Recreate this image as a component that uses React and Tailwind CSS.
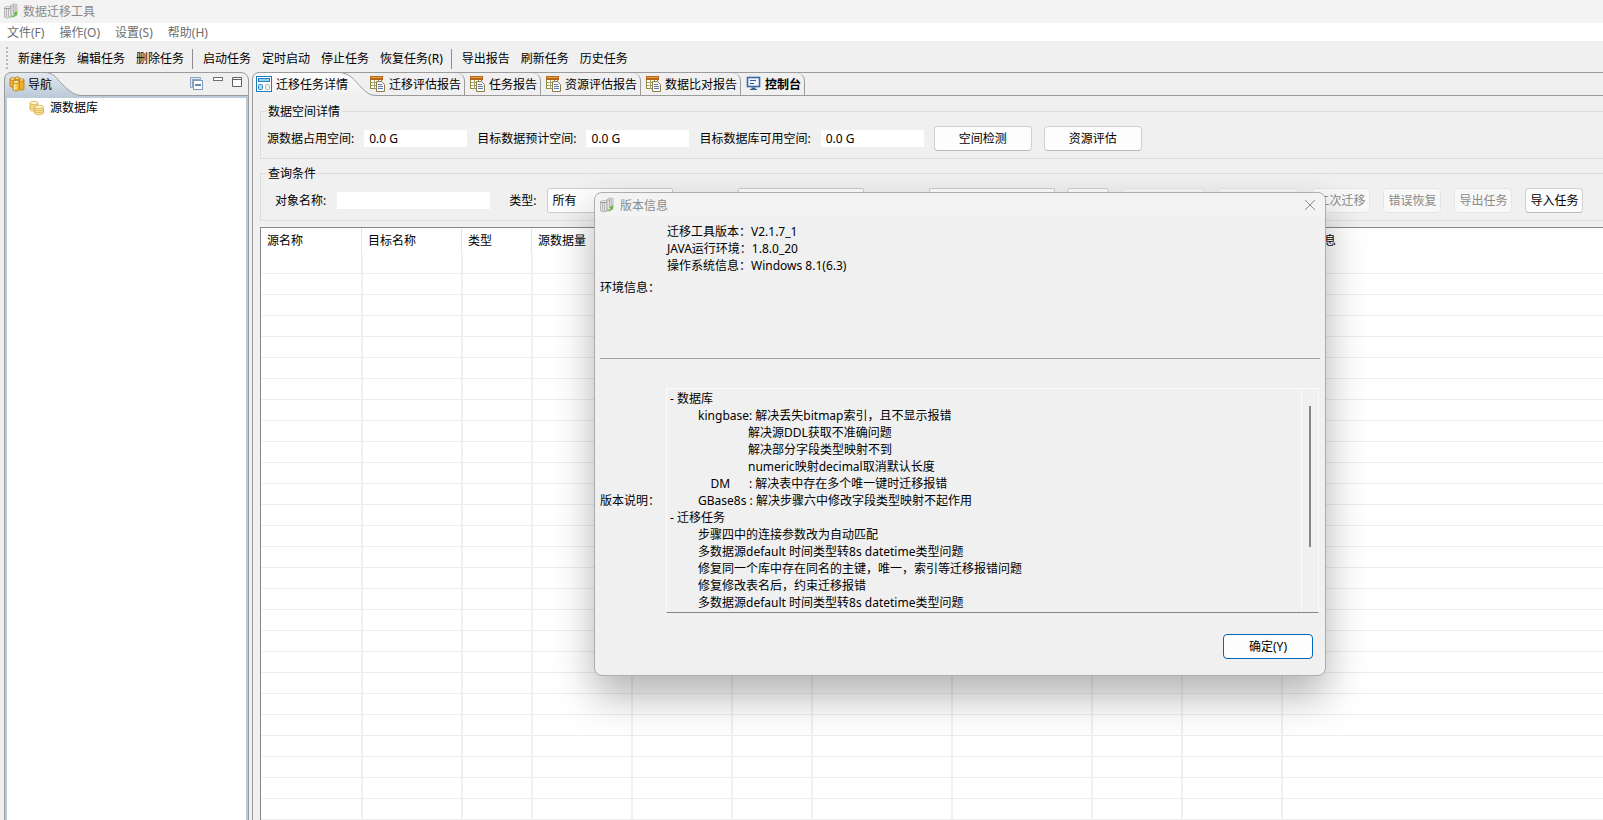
import React, { useState } from 'react';

const menus = ['文件(F)', '操作(O)', '设置(S)', '帮助(H)'];

const toolbarGroups = [
    ['新建任务', '编辑任务', '删除任务'],
    ['启动任务', '定时启动', '停止任务', '恢复任务(R)'],
    ['导出报告', '刷新任务', '历史任务'],
];

const reportTabs = ['迁移评估报告', '任务报告', '资源评估报告', '数据比对报告'];

const spaces = [
    { id: 'source-used', label: '源数据占用空间:' },
    { id: 'target-expected', label: '目标数据预计空间:' },
    { id: 'target-free', label: '目标数据库可用空间:' },
];

const columns = [
    { id: 'source', name: '源名称', width: 'w-[101px]' },
    { id: 'target', name: '目标名称', width: 'w-[100px]' },
    { id: 'type', name: '类型', width: 'w-[70px]' },
    { id: 'source-rows', name: '源数据量', width: 'w-[100px]' },
    { id: 'target-rows', name: '', width: 'w-[100px]' },
    { id: 'state', name: '', width: 'w-[80px]' },
    { id: 'start', name: '', width: 'w-[140px]' },
    { id: 'end', name: '', width: 'w-[140px]' },
    { id: 'elapsed', name: '', width: 'w-[90px]' },
    { id: 'progress', name: '', width: 'w-[100px]' },
    { id: 'error', name: '错误信息', width: 'w-auto' },
];

const envInfo = ['迁移工具版本：V2.1.7_1', 'JAVA运行环境：1.8.0_20', '操作系统信息：Windows 8.1(6.3)'];

const releaseNotes = `- 数据库
         kingbase: 解决丢失bitmap索引，且不显示报错
                         解决源DDL获取不准确问题
                         解决部分字段类型映射不到
                         numeric映射decimal取消默认长度
             DM      : 解决表中存在多个唯一键时迁移报错
         GBase8s : 解决步骤六中修改字段类型映射不起作用
- 迁移任务
         步骤四中的连接参数改为自动匹配
         多数据源default 时间类型转8s datetime类型问题
         修复同一个库中存在同名的主键，唯一，索引等迁移报错问题
         修复修改表名后，约束迁移报错
         多数据源default 时间类型转8s datetime类型问题`;

// Servidores grises con la flecha verde de la aplicación
function AppIcon() {
    return (
        <svg width="16" height="16" viewBox="0 0 16 16" aria-hidden="true">
            <path d="M7.5 2.5 10 1l4 .5v9L10.500 13l-3-1z" fill="#e2e2e2" stroke="#b0b0b0" strokeWidth=".8" />
            <path d="M10.500 2.500v9M12.200 2.500v8M8.500 3.500l3-1" stroke="#a2a2a2" strokeWidth=".7" fill="none" />
            <path d="M1.500 5h6v9.500h-6z" fill="#e6e6e6" />
            <path d="M1.500 4.500 4 3.500l4 .5v10l-4 1-2.500-1zM3.500 6v8M5.500 6v8" fill="none" stroke="#a8a8a8" strokeWidth=".8" />
            <path d="M1.500 5.500h6" stroke="#8a8a8a" strokeWidth=".8" />
            <path d="M6.500 13.500c3 .3 4.500-.7 5.200-2.300L10.500 10.500 14 8l.2 5-1-.7c-1.200 2-4.200 2.800-6.700 1.200z" fill="#6ab83c" />
        </svg>
    );
}

function DatabaseIcon() {
    return (
        <svg width="16" height="16" viewBox="0 0 16 16" aria-hidden="true">
            <g stroke="#b9770b" strokeWidth=".8">
                <path d="M1 3v7c0 1.500 5 1.500 5 0V3z" fill="#f3b93a" />
                <ellipse cx="3.500" cy="3" rx="2.500" ry="1.400" fill="#fde08a" />
                <path d="M6 2.500v8h4.500v-8z" fill="#f3b93a" />
                <ellipse cx="8.200" cy="2.200" rx="2.300" ry="1.300" fill="#fde08a" />
                <path d="M10 4v9c0 1.500 5 1.500 5 0V4z" fill="#f0ad25" />
                <ellipse cx="12.500" cy="4" rx="2.500" ry="1.300" fill="#fde08a" />
                <path d="M4 6v7.500c0 2 6 2 6 0V6z" fill="#f8c548" />
                <ellipse cx="7" cy="6" rx="3" ry="1.500" fill="#fff0b8" />
            </g>
            <path d="M5.700 8v6" stroke="#fff1b5" strokeWidth="1.200" />
        </svg>
    );
}

function SourceIcon() {
    return (
        <svg width="16" height="16" viewBox="0 0 16 16" aria-hidden="true">
            <g fill="#f9e39a" stroke="#d3a843" strokeWidth=".7">
                <path d="M1 3.200v6.500c0 1.900 8 1.900 8 0V3.200z" />
                <path d="M1 5.500c0 1.800 8 1.800 8 0M1 7.700c0 1.800 8 1.800 8 0" fill="none" />
                <ellipse cx="5" cy="3" rx="4" ry="1.700" fill="#fff3c8" />
                <path d="M5.500 7.200v5.800c0 2.300 9 2.300 9 0V7.200z" />
                <path d="M5.500 9.200c0 1.900 9 1.900 9 0M5.500 11.200c0 1.900 9 1.900 9 0" fill="none" />
                <ellipse cx="10" cy="7" rx="4.500" ry="1.700" fill="#fff3c8" />
            </g>
        </svg>
    );
}

function DetailIcon() {
    return (
        <svg width="16" height="16" viewBox="0 0 16 16" aria-hidden="true">
            <rect x=".5" y=".5" width="15" height="15" fill="#fff" stroke="#1b7fb8" />
            <rect x="2.500" y="2.500" width="11" height="3" fill="#8fd0f5" stroke="#2a83c0" />
            <rect x="2.500" y="8.500" width="4" height="5" rx="1" fill="#b5e0f9" stroke="#2a83c0" />
            <rect x="9.500" y="8.500" width="4" height="5" rx="1" fill="#f1f1f1" stroke="#b5b5b5" />
        </svg>
    );
}

function ReportIcon() {
    return (
        <svg width="16" height="16" viewBox="0 0 16 16" aria-hidden="true">
            <rect x=".5" y="3.500" width="11" height="9" fill="#fffdf2" stroke="#8f8a4c" />
            <path d="M1 6.500h10M1 9.500h10M4.500 4v9M8.500 4v9" stroke="#a3a268" />
            <rect x="0" y="0" width="13" height="4" fill="#b5651c" />
            <path d="M1 1.500h11" stroke="#e9a03f" />
            <path d="M6.500 5.500h5l3 3v7h-8z" fill="#f5f8ff" stroke="#8d7c45" />
            <path d="M8 8.500h4M8 10.500h5M8 12.500h5" stroke="#5a78b8" />
        </svg>
    );
}

function ConsoleIcon() {
    return (
        <svg width="16" height="16" viewBox="0 0 16 16" aria-hidden="true">
            <rect x="1.500" y="1.500" width="12" height="9" fill="#f1f7fe" stroke="#3a69a8" strokeWidth="1.600" />
            <path d="M4 4.500h6M4 7.500h4" stroke="#37578f" />
            <path d="M5.500 11.500h4v1.500h1.500v1H4v-1h1.500z" fill="#3a5d96" />
        </svg>
    );
}

function PlainButton({ children, className = '', disabled = false }) {
    return (
        <button
            type="button"
            disabled={disabled}
            className={`h-[25px] shrink-0 rounded border text-center whitespace-nowrap ${
                disabled ? 'border-[#e6e6e6] bg-[#f8f8f8] text-[#8a8a8a]' : 'border-[#d0d0d0] border-b-[#bababa] bg-[#fdfdfd] text-black'
            } ${className}`}
        >
            {children}
        </button>
    );
}

function Toolbar() {
    return (
        <div className="flex h-[31px] shrink-0 items-center bg-[#f0f0f0] pt-1 pl-[6px]" role="toolbar">
            {/* Agarre punteado */}
            <span className="h-[23px] w-[2px] bg-[repeating-linear-gradient(to_bottom,#b8b8b8_0px,#b8b8b8_2px,transparent_2px,transparent_4px)]" />
            {toolbarGroups.map((group, i) => (
                <div key={group[0]} className="flex items-center">
                    {i > 0 && <span className="ml-2 h-5 w-px bg-[#8c8c8c]" />}
                    <div className="ml-[10px] flex gap-[11px]">
                        {group.map((name) => (
                            <button key={name} type="button" className="whitespace-nowrap">
                                {name}
                            </button>
                        ))}
                    </div>
                </div>
            ))}
        </div>
    );
}

function Navigator() {
    return (
        <aside className="flex w-[245px] shrink-0 flex-col">
            <div className="relative flex h-6 shrink-0 items-center justify-between rounded-t-lg border border-[#9b9b9b] bg-[#f0f0f0] pr-[6px]">
                <svg className="absolute -top-px -left-px" width="79" height="24" viewBox="0 0 79 24" aria-hidden="true">
                    <defs>
                        <linearGradient id="nav-tab" x1="0" y1="0" x2="0" y2="1">
                            <stop offset="0" stopColor="#e3e9f0" />
                            <stop offset="1" stopColor="#bdcbd9" />
                        </linearGradient>
                    </defs>
                    <path d="M.5 24V8Q.5.5 8 .5H40C50 .5 52 6 58 12S70 23.500 78 23.500V24z" fill="url(#nav-tab)" />
                    <path d="M.5 24V8Q.5.5 8 .5H40C50 .5 52 6 58 12S70 23.500 78 23.500" fill="none" stroke="#9b9b9b" />
                </svg>
                <h2 className="relative flex items-center gap-[3px] pl-1">
                    <DatabaseIcon />
                    导航
                </h2>
                <div className="flex items-start gap-[9px]">
                    <button type="button" aria-label="全部折叠">
                        <svg width="14" height="14" viewBox="0 0 14 14">
                            <path d="M.5 10.500V.5h10v2h-8v8z" fill="#dfeaf5" stroke="#8aa3bf" />
                            <rect x="3.500" y="3.500" width="9" height="9" fill="#fff" stroke="#7c9abb" />
                            <path d="M5 8h6" stroke="#0b4a86" strokeWidth="1.300" />
                        </svg>
                    </button>
                    <button type="button" aria-label="最小化">
                        <svg width="10" height="12" viewBox="0 0 10 12">
                            <rect x=".5" y=".5" width="9" height="3" fill="#fff" stroke="#707070" />
                        </svg>
                    </button>
                    <button type="button" aria-label="最大化">
                        <svg width="10" height="12" viewBox="0 0 10 12">
                            <path d="M.5.5h9v9h-9zM.5 2.500h9" fill="#fff" stroke="#606060" />
                        </svg>
                    </button>
                </div>
            </div>
            <div className="flex grow border-x border-[#9b9b9b] bg-[#bdcbd9] px-[2px] pt-[2px]">
                <ul className="grow bg-white pt-px">
                    <li className="flex items-center gap-[5px] pl-[22px]">
                        <SourceIcon />
                        源数据库
                    </li>
                </ul>
            </div>
        </aside>
    );
}

function TabBar() {
    return (
        <div className="flex h-6 shrink-0 rounded-tl-lg border-t border-[#9b9b9b]" role="tablist">
            <button type="button" role="tab" aria-selected="true" className="relative z-10 -mt-px -mr-[13px] flex w-[126px] items-center gap-1 pl-1">
                <svg className="absolute top-0 left-0" width="126" height="24" viewBox="0 0 126 24" aria-hidden="true">
                    <defs>
                        <linearGradient id="detail-tab" x1="0" y1="0" x2="0" y2="1">
                            <stop offset="0" stopColor="#fdfdfd" />
                            <stop offset="1" stopColor="#f0f0f0" />
                        </linearGradient>
                    </defs>
                    <path d="M.5 24V8Q.5.5 8 .5H86C98 .5 102 8 109 15S118 23.500 126 23.500V24z" fill="url(#detail-tab)" />
                    <path d="M.5 24V8Q.5.5 8 .5H86C98 .5 102 8 109 15S118 23.500 126 23.500" fill="none" stroke="#9b9b9b" />
                </svg>
                <span className="relative flex items-center gap-1 whitespace-nowrap">
                    <DetailIcon />
                    迁移任务详情
                </span>
            </button>
            {reportTabs.map((name) => (
                <button
                    key={name}
                    type="button"
                    role="tab"
                    className="flex shrink-0 items-center gap-[3px] rounded-tr-lg border-r border-b border-[#9b9b9b] pr-[3px] pl-[5px] whitespace-nowrap"
                >
                    <ReportIcon />
                    {name}
                </button>
            ))}
            <button
                type="button"
                role="tab"
                className="flex shrink-0 items-center gap-[3px] rounded-tr-lg border-r border-b border-[#9b9b9b] pr-[3px] pl-[5px] font-bold whitespace-nowrap"
            >
                <ConsoleIcon />
                控制台
            </button>
            <span className="grow border-b border-[#9b9b9b]" />
        </div>
    );
}

function SpacePanel() {
    return (
        <fieldset className="border border-r-0 border-[#dcdcdc] pt-[6px] pb-[7px] pl-[6px]">
            <legend className="-ml-px px-[2px]">数据空间详情</legend>
            <div className="flex items-center gap-[10px]">
                {spaces.map((space) => (
                    <React.Fragment key={space.id}>
                        <label htmlFor={space.id} className="whitespace-nowrap">
                            {space.label}
                        </label>
                        <input id={space.id} readOnly value="0.0 G" className="h-[17px] w-[103px] bg-white px-[5px]" />
                    </React.Fragment>
                ))}
                <div className="flex gap-3">
                    <PlainButton className="w-[98px]">空间检测</PlainButton>
                    <PlainButton className="w-[98px]">资源评估</PlainButton>
                </div>
            </div>
        </fieldset>
    );
}

function FilterSelect({ id, label, labelWidth = '' }) {
    return (
        <div className="flex items-center gap-[11px]">
            <label htmlFor={id} className={`whitespace-nowrap ${labelWidth}`}>
                {label}
            </label>
            <select id={id} className="h-[25px] w-[126px] rounded-xs border border-[#cccccc] bg-[#fdfdfd]">
                <option>所有</option>
            </select>
        </div>
    );
}

function QueryPanel() {
    return (
        <fieldset className="mt-[6px] border border-r-0 border-[#dcdcdc] pt-[6px] pb-[7px] pl-[6px]">
            <legend className="-ml-px px-[2px]">查询条件</legend>
            <div className="flex items-center gap-3 pl-2">
                <div className="flex items-center gap-[19px]">
                    <div className="flex items-center gap-[11px]">
                        <label htmlFor="object-name" className="whitespace-nowrap">
                            对象名称:
                        </label>
                        <input id="object-name" className="h-[17px] w-[153px] bg-white px-[5px]" />
                    </div>
                    <FilterSelect id="object-type" label="类型:" />
                    <FilterSelect id="task-state" label="状态:" labelWidth="w-[35px]" />
                    <FilterSelect id="task-result" label="结果:" labelWidth="w-[35px]" />
                </div>
                <div className="flex gap-[13px]">
                    <PlainButton className="w-[42px]">查询</PlainButton>
                    <PlainButton className="w-[82px]" disabled>
                        开始迁移
                    </PlainButton>
                    <PlainButton className="w-[82px]" disabled>
                        停止迁移
                    </PlainButton>
                    <PlainButton className="w-[58px]" disabled>
                        二次迁移
                    </PlainButton>
                    <PlainButton className="w-[58px]" disabled>
                        错误恢复
                    </PlainButton>
                    <PlainButton className="w-[58px]" disabled>
                        导出任务
                    </PlainButton>
                    <PlainButton className="w-[58px]">导入任务</PlainButton>
                </div>
            </div>
        </fieldset>
    );
}

function TaskTable() {
    return (
        <div className="mt-[6px] grow overflow-hidden border-t border-l border-[#828790] bg-white">
            <table className="w-full table-fixed border-separate border-spacing-0">
                <thead>
                    <tr className="h-[25px]">
                        {columns.map((col) => (
                            <th key={col.id} className={`${col.width} border-r border-[#e5e5e5] p-0 pl-[6px] text-left font-normal last:border-r-0`}>
                                {col.name}
                            </th>
                        ))}
                    </tr>
                </thead>
                <tbody>
                    {Array.from({ length: 27 }, (_, row) => (
                        <tr key={row} className="h-[21px]">
                            {columns.map((col) => (
                                <td
                                    key={col.id}
                                    className="border-x border-b border-x-[#edf1f7] border-b-[#ededed] p-0 first:border-l-0 last:border-r-0"
                                />
                            ))}
                        </tr>
                    ))}
                </tbody>
            </table>
        </div>
    );
}

function VersionDialog({ onClose }) {
    return (
        <div
            role="dialog"
            aria-labelledby="version-title"
            className="absolute top-[192px] left-[594px] z-20 w-[732px] rounded-lg border border-[#adadad] bg-[#f0f0f0] shadow-[0_20px_40px_rgba(0,0,0,0.3)]"
        >
            <div className="flex h-6 items-center gap-[5px] rounded-t-lg bg-[#f3f3f3] pr-[9px] pl-1">
                <AppIcon />
                <h2 id="version-title" className="grow text-[#8a8a8a]">
                    版本信息
                </h2>
                <button type="button" aria-label="关闭" onClick={onClose}>
                    <svg width="12" height="12" viewBox="0 0 12 12">
                        <path d="M1 1l10 10M11 1 1 11" stroke="#8a8a8a" fill="none" />
                    </svg>
                </button>
            </div>

            {/* Información del entorno */}
            <div className="mx-[5px] flex h-[142px] items-center border-b border-[#a0a0a0]">
                <h3 className="w-[67px]">环境信息：</h3>
                <div className="self-start pt-[6px]">
                    {envInfo.map((line) => (
                        <p key={line}>{line}</p>
                    ))}
                </div>
            </div>

            {/* Notas de la versión */}
            <div className="mt-[29px] mr-[6px] ml-[5px] flex items-center">
                <label htmlFor="release-notes" className="w-[66px] shrink-0">
                    版本说明：
                </label>
                <div className="flex h-[225px] grow border border-[#fbfbfb] border-b-[#868686]">
                    <textarea
                        id="release-notes"
                        readOnly
                        value={releaseNotes}
                        className="grow resize-none overflow-hidden border-r border-[#fbfbfb] bg-transparent pt-px pl-[3px] whitespace-pre outline-none"
                    />
                    <div className="w-4 pt-[17px] pl-[7px]">
                        <div className="h-[141px] w-[2px] bg-[#868686]" />
                    </div>
                </div>
            </div>

            <div className="flex justify-end pt-[21px] pr-3 pb-4">
                <button type="button" onClick={onClose} className="h-[25px] w-[90px] rounded border border-[#0067c0] bg-[#fdfdfd]">
                    确定(Y)
                </button>
            </div>
        </div>
    );
}

function App() {
    const [showVersion, setShowVersion] = useState(true);

    return (
        <div className="relative flex h-screen flex-col overflow-hidden bg-[#f0f0f0] font-['Noto_Sans','Noto_Sans_CJK_SC',sans-serif] text-[12px] leading-[17px] text-black">
            <header className="flex h-[23px] shrink-0 items-center gap-1 bg-[#f3f3f3] pb-px pl-[3px] text-[#8a8a8a]">
                <AppIcon />
                <h1>数据迁移工具</h1>
            </header>
            <nav className="flex h-[18px] shrink-0 items-center gap-[15px] bg-white pl-[7px] text-[#6d6d6d]">
                {menus.map((name) => (
                    <button key={name} type="button" onClick={() => name.startsWith('帮助') && setShowVersion(true)}>
                        {name}
                    </button>
                ))}
            </nav>
            <Toolbar />
            <div className="flex min-h-0 grow gap-[3px] pl-1">
                <Navigator />
                <main className="flex min-w-0 grow flex-col">
                    <TabBar />
                    <div className="flex min-h-0 grow flex-col border-l border-[#9b9b9b] pt-[7px] pl-[7px]">
                        <SpacePanel />
                        <QueryPanel />
                        <TaskTable />
                    </div>
                </main>
            </div>
            {showVersion && <VersionDialog onClose={() => setShowVersion(false)} />}
        </div>
    );
}

export default App;
